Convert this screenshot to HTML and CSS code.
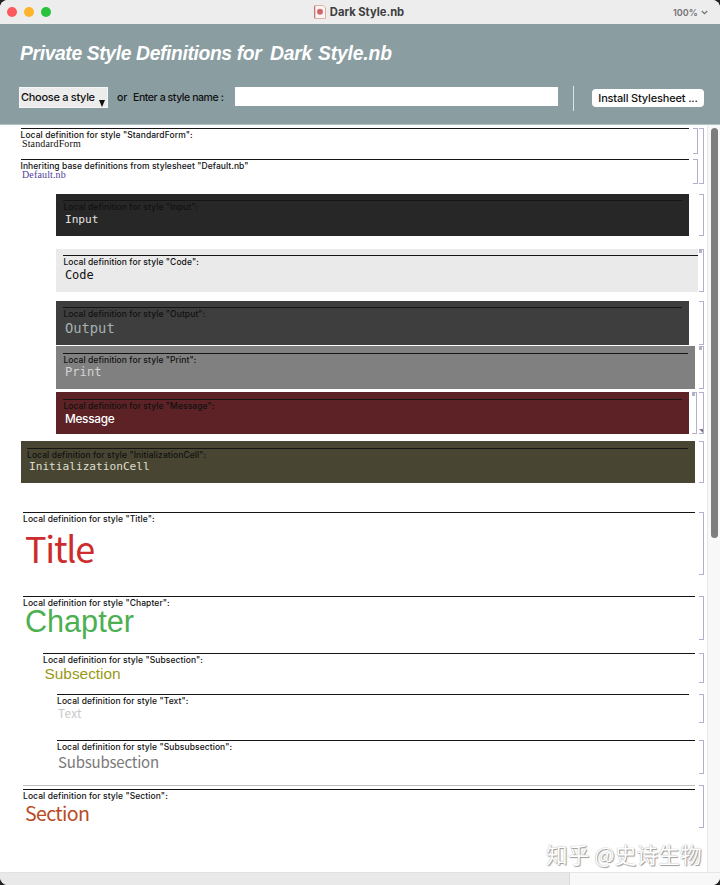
FILE: index.html
```html
<!DOCTYPE html>
<html lang="en">
<head>
<meta charset="utf-8">
<title>Dark Style.nb</title>
<link rel="stylesheet" href="styles.css">
</head>
<body>
<div class="window">
  <header class="titlebar">
    <div class="lights"><i class="light red"></i><i class="light amber"></i><i class="light green"></i></div>
    <div class="doc">
      <svg class="doc-icon" width="12" height="14" viewBox="0 0 12 14"><path d="M.5 .5h8.700l2.300 2.400v10.600H.5z" fill="#faf7f6" stroke="#e3aaa6"/><path d="M.8 1v12" stroke="#bd625f"/><circle cx="6" cy="6.700" r="2.800" fill="#d97b7b"/><path d="m6 3.300.8 1.400 1.800-.6-.5 1.800 1.300.8-1.300.9.5 1.800-1.800-.6L6 10.200l-.8-1.400-1.800.6.5-1.800-1.300-.9 1.300-.8-.5-1.800 1.800.6z" fill="#ce6669"/></svg>
      <span class="doc-name">Dark Style.nb</span>
    </div>
    <div class="magnify"><span>100%</span><svg width="7" height="5" viewBox="0 0 7 5"><path d="M.8 1l2.700 2.700L6.200 1" fill="none" stroke="#6d6d6d" stroke-width="1.100"/></svg></div>
  </header>

  <section class="toolbar">
    <h1 class="heading"><span class="h-main">Private Style Definitions for</span><span class="h-dark">Dark</span><span class="h-name">Style.nb</span></h1>
    <div class="controls">
      <div class="chooser"><span>Choose a style</span><svg width="6" height="7" viewBox="0 0 6 7"><path d="M0 0h6L3 7z" fill="#111"/></svg></div>
      <span class="or">or</span>
      <span class="enter">Enter a style name :</span>
      <div class="field"></div>
      <div class="rule"></div>
      <div class="install"><span>Install Stylesheet ...</span></div>
    </div>
  </section>

  <main class="content">
    <div class="notebook">
      <div class="group">
        <div class="group-cells">
          <div class="cell c-standard"><div class="box"><p class="label">Local definition for style "StandardForm":</p><p class="sample serif">StandardForm</p></div><i class="bracket"></i></div>
          <div class="cell c-inherit"><div class="box"><p class="label">Inheriting base definitions from stylesheet "Default.nb"</p><p class="sample serif link">Default.nb</p></div><i class="bracket"></i></div>
        </div>
        <i class="bracket outer"></i>
      </div>
      <div class="cell c-input"><div class="box filled"><p class="label">Local definition for style "Input":</p><p class="sample mono">Input</p></div><i class="bracket"></i></div>
      <div class="cell c-code"><div class="box filled"><p class="label">Local definition for style "Code":</p><p class="sample mono">Code</p></div><i class="bracket mark"></i></div>
      <div class="cell c-output"><div class="box filled"><p class="label">Local definition for style "Output":</p><p class="sample mono">Output</p></div><i class="bracket"></i></div>
      <div class="cell c-print"><div class="box filled"><p class="label">Local definition for style "Print":</p><p class="sample mono">Print</p></div><i class="bracket mark"></i></div>
      <div class="cell c-message"><div class="box filled"><p class="label">Local definition for style "Message":</p><p class="sample">Message</p></div><i class="bracket inner mark"></i><i class="bracket closed"></i></div>
      <div class="cell c-init"><div class="box filled"><p class="label">Local definition for style "InitializationCell":</p><p class="sample mono">InitializationCell</p></div><i class="bracket"></i></div>
      <div class="cell c-title"><div class="box"><p class="label">Local definition for style "Title":</p><p class="sample sans">Title</p></div><i class="bracket"></i></div>
      <div class="cell c-chapter"><div class="box"><p class="label">Local definition for style "Chapter":</p><p class="sample helv">Chapter</p></div><i class="bracket"></i></div>
      <div class="cell c-subsection"><div class="box"><p class="label">Local definition for style "Subsection":</p><p class="sample helv">Subsection</p></div><i class="bracket"></i></div>
      <div class="cell c-text"><div class="box"><p class="label">Local definition for style "Text":</p><p class="sample sans">Text</p></div><i class="bracket"></i></div>
      <div class="cell c-subsub"><div class="box"><p class="label">Local definition for style "Subsubsection":</p><p class="sample sans">Subsubsection</p></div><i class="bracket"></i></div>
      <div class="cell c-section"><div class="box"><p class="label">Local definition for style "Section":</p><p class="sample sans">Section</p></div><i class="bracket"></i></div>
      <div class="watermark" lang="zh-CN">知乎 @史诗生物</div>
    </div>
    <div class="track"><div class="thumb"></div></div>
  </main>
  <footer class="status"><div class="status-left"></div><div class="status-right"></div></footer>
</div>
</body>
</html>
```
FILE: styles.css
```css
* { box-sizing: border-box; }
body { margin: 0; background: #222; font-family: Inter, "Liberation Sans", sans-serif; }
p, h1 { margin: 0; }
span, p { white-space: nowrap; }
.window { display: flex; flex-direction: column; width: 720px; height: 885px; background: #fff; border-radius: 8px; overflow: hidden; }

.titlebar { display: grid; grid-template-columns: 1fr auto 1fr; align-items: center; height: 24px; padding: 0 12px 0 7px; background: #ededed; }
.lights { display: flex; gap: 7px; }
.light { width: 10px; height: 10px; border-radius: 50%; }
.red { background: #fc5b5d; }
.amber { background: #fdb42c; }
.green { background: #28c23b; }
.doc { display: flex; align-items: center; gap: 4px; margin-left: 3px; margin-top: -1px; }
.doc-name { padding-top: 1px; font-size: 11.200px; font-weight: 700; line-height: 14px; color: #3f3f3f; }
.magnify { display: flex; justify-content: flex-end; align-items: center; gap: 3px; font-size: 9px; font-weight: 600; color: #737373; }
.magnify span { letter-spacing: .1px; }

.toolbar { height: 101px; padding-top: 18px; background: #8a9da1; border-bottom: 1px solid #b4c0c2; }
.heading { display: flex; padding-left: 20px; font: italic bold 19.300px/23px "Liberation Sans", sans-serif; color: #fff; }
.h-main { width: 250px; letter-spacing: -.36px; }
.h-dark { width: 48px; letter-spacing: -.2px; }
.h-name { letter-spacing: -.15px; }
.controls { display: flex; align-items: flex-start; height: 26px; margin-top: 20px; padding-left: 19px; font-size: 10.500px; font-weight: 500; color: #111; }
.chooser { display: flex; justify-content: space-between; width: 89px; height: 21px; margin-top: 2px; padding: 0 2px 0 1px; background: #ececec; border: 1px solid #f6f6f6; font-size: 11px; line-height: 19px; letter-spacing: -.3px; }
.chooser svg { flex: none; margin-top: 12px; }
.or, .enter { line-height: 15px; margin-top: 5px; }
.or { width: 16px; margin-left: 9px; }
.enter { width: 102px; letter-spacing: -.42px; }
.field { width: 323px; height: 19px; margin-top: 2px; background: #fff; }
.rule { width: 1px; height: 25px; margin: 1px 0 0 15px; background: #dce3e4; }
.install { width: 112px; height: 18px; margin: 4px 0 0 18px; border-radius: 4px; background: #fff; text-align: center; line-height: 18px; font-size: 11px; letter-spacing: -.16px; }

.content { display: flex; height: 747px; }
.notebook { position: relative; width: 707px; padding-top: 3px; }
.group { display: flex; height: 56px; }
.group-cells { width: 698px; }
.cell { display: flex; justify-content: flex-end; padding-right: 3px; }
.box { margin-right: auto; color: #111; }
.label { height: 12px; border-top: 1px solid #151515; font-size: 8.500px; font-weight: 500; line-height: 12px; letter-spacing: .08px; }
.sample { padding-left: 2px; font-size: 12px; }
.serif { padding-left: 1.500px; font-family: "Liberation Serif", serif; font-size: 10px; line-height: 8px; letter-spacing: .14px; }
.mono { font-family: "DejaVu Sans Mono", monospace; }
.helv { font-family: "Liberation Sans", sans-serif; }
.sans { font-family: "Noto Sans CJK SC", sans-serif; }
.link { color: #50419b; }
.filled { padding: 6px 7px 0 7px; }
.filled .sample { padding-left: 1.500px; }

.bracket { position: relative; width: 5px; border: 1px solid #b3afcd; border-left: 0; }
.inner { margin-right: 2px; }
.mark::before { content: ""; position: absolute; left: 0; top: 0; width: 3px; height: 3px; background: #b5b1bf; }
.closed::after { content: ""; position: absolute; right: 0; bottom: 0; border: 2px solid #7e7a8c; border-left-color: transparent; border-bottom-color: transparent; }
.group-cells .cell { padding-right: 0; }
.group-cells .bracket { margin-right: 0; }
.outer { margin-left: 1px; }

.c-standard { height: 26px; }
.c-inherit { height: 25px; margin-top: 5px; }
.c-inherit .label { letter-spacing: .07px; }
.c-standard .box, .c-inherit .box { width: 668.500px; margin-left: 20.500px; }
.c-input { height: 42px; margin-top: 10px; }
.c-input .box { width: 632.600px; margin-left: 56.400px; background: #272727; }
.c-input .sample { color: #e2e2e2; font-size: 11.200px; line-height: 15px; }
.c-code { height: 43px; margin-top: 13px; }
.c-code .box { width: 641.600px; margin-left: 56.400px; padding-right: 0; background: #eaeaea; }
.c-code .sample { font-size: 12px; line-height: 17px; }
.c-output { height: 44px; margin-top: 9px; }
.c-output .box { width: 632.600px; margin-left: 56.400px; background: #3e3e3e; }
.c-output .sample { color: #a5b0b0; font-size: 13.800px; line-height: 18px; }
.c-print { height: 43px; margin-top: 1px; }
.c-print .box { width: 638.600px; margin-left: 56.400px; background: #808080; }
.c-print .sample { color: #d2d2d2; font-size: 12.200px; line-height: 15px; }
.c-message { height: 42px; margin-top: 3px; }
.c-message .box { width: 632.600px; margin-left: 56.400px; background: #5c2226; }
.c-message .sample { color: #fff; font-size: 11.800px; font-weight: 500; line-height: 16px; letter-spacing: -.25px; }
.c-init { height: 42px; margin-top: 7px; }
.c-init .box { width: 674px; margin-left: 21px; padding-left: 6px; background: #484632; }
.c-init .sample { padding-left: 2px; color: #dedece; font-size: 11.150px; line-height: 14px; }
.c-print .box, .c-message .box, .c-init .box { padding-top: 6.500px; }
.c-title { height: 63px; margin-top: 29px; }
.c-title .box, .c-chapter .box, .c-section .box { width: 672px; margin-left: 23px; }
.c-title .sample { color: #cc2c2d; font-size: 36px; line-height: 47px; letter-spacing: -1.250px; }
.c-chapter { height: 44px; margin-top: 21px; }
.c-chapter .sample { color: #4caf50; font-size: 30.600px; line-height: 26px; }
.c-subsection { height: 30px; margin-top: 13px; }
.c-subsection .box { width: 652px; margin-left: 43px; }
.c-subsection .sample { padding-left: 1.500px; color: #999814; font-size: 15.400px; line-height: 17px; }
.c-text { height: 29px; margin-top: 11px; }
.c-text .box { width: 632px; margin-left: 57px; }
.c-text .sample { padding-left: 1px; color: #c8c8c8; font-size: 11.800px; line-height: 14px; letter-spacing: .25px; }
.c-subsub { height: 34px; margin-top: 17px; }
.c-subsub .box { width: 638px; margin-left: 57px; }
.c-subsub .sample { padding-left: 1px; color: #7a7a7a; font-size: 15px; line-height: 20px; letter-spacing: -.2px; }
.c-section { height: 43px; margin-top: 11px; }
.c-section .box { border-top: 1px solid #bdbdbd; padding-top: 3px; }
.c-section .sample { color: #b84b25; font-size: 19.600px; line-height: 24px; letter-spacing: -.65px; }

.watermark { position: absolute; left: 546px; bottom: 4px; font: 21.600px/28px "Noto Sans CJK SC", sans-serif; letter-spacing: .1px; color: #fff; text-shadow: 1px 1px 1px #999, 0 0 1px #999; white-space: nowrap; }
.track { width: 13px; padding: 3px 3px 0 3px; background: #f8f8f8; border-left: 1px solid #e9e9e9; }
.thumb { width: 7px; height: 410px; border-radius: 3.500px; background: #7d7d7d; }
.status { display: flex; height: 13px; }
.status-left { width: 570px; background: #e9e9e9; border-right: 1px solid #d9d9d9; border-top: 1px solid #e2e2e2; }
.status-right { flex: 1; background: #f8f8f8; border-top: 1px solid #e6e6e6; }
```
